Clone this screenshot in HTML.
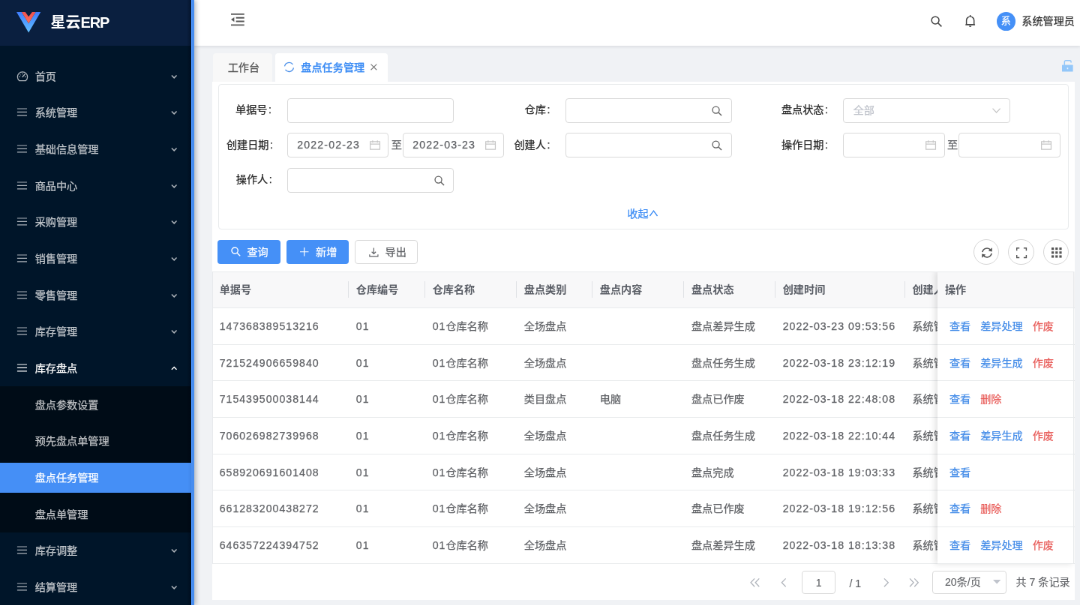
<!DOCTYPE html>
<html lang="zh-CN">
<head>
<meta charset="utf-8">
<title>星云ERP - 盘点任务管理</title>
<style>
*{box-sizing:border-box;margin:0;padding:0}
html,body{width:1080px;height:605px;overflow:hidden;background:#f0f2f5}
body{font-family:"Liberation Sans","Noto Sans CJK SC",sans-serif;font-size:14.15px;color:#606266;-webkit-text-stroke:.25px}
#app{position:absolute;left:0;top:0;width:1440px;height:807px;transform:scale(0.75);transform-origin:0 0;background:#f0f2f5;overflow:hidden;will-change:transform}
#app *{position:absolute}
svg{overflow:visible}
/* sidebar */
#side{left:0;top:0;width:254.53px;height:807px;background:#001529;box-shadow:2px 0 6px rgba(0,21,41,.35);z-index:5}
#logo{left:0;top:0;width:100%;height:61.07px;background:#0a1f3f}
#logo svg{left:22.4px;top:15.73px;width:32.27px;height:27.47px}
#logo .ttl{left:67.47px;top:0;height:61.07px;line-height:61.07px;font-size:20px;font-weight:700;color:#fff;white-space:nowrap;letter-spacing:0;-webkit-text-stroke:0}
#strip{left:254.53px;top:0;width:4.13px;height:807px;background:#478df0;z-index:6;box-shadow:2px 0 6px rgba(0,21,41,.3)}
#sideshade{left:248.67px;top:0;width:5.87px;height:807px;background:linear-gradient(90deg,rgba(0,0,0,0),rgba(0,5,15,.35));}
#subbg{left:0;top:515.0px;width:100%;height:194.67px;background:#000c17}
.it{left:0;width:100%;height:48.67px;color:rgba(255,255,255,.68)}
.it .mi{left:22.13px;top:16.8px;width:14.93px;height:14.93px}
.it .mt{left:46.67px;top:0.53px;height:48.67px;line-height:48.67px;font-size:14.15px;white-space:nowrap}
.it .chev{left:226.53px;top:19.6px;width:10.4px;height:10.4px}
.it.open{color:#fff}
.it.act{color:#fff}
.it.act::before{content:"";position:absolute;left:0;top:4.67px;width:100%;height:40.4px;background:#458ff6}
/* header */
#head{left:258.67px;top:0;width:1181.33px;height:61.2px;background:#fff;box-shadow:0 1px 4px rgba(0,21,41,.12);z-index:3}
#head .uname{left:1103.6px;top:0;height:56.8px;line-height:56.8px;font-size:14.15px;color:#333;white-space:nowrap}
#head .av{left:1070.4px;top:16.0px;width:24.67px;height:24.67px;border-radius:50%;background:#4590f7;color:#fff;font-size:13px;text-align:center;line-height:24.67px}
/* tabs */
.tab{top:70.53px;height:38.13px;border-radius:4px 4px 0 0;font-size:14.15px;line-height:38.13px;white-space:nowrap}
#tab1{left:283.73px;width:78.8px;background:#f8f8f8;color:#555;padding-left:20.0px}
#tab2{left:367.07px;width:149.87px;background:#fff;color:#3b8cf5}
#tab2 .tt{left:34.27px;top:0;font-weight:500}
#main{left:282.67px;top:108.67px;width:1150.4px;height:691.33px;background:#fff}
/* form */
#card{left:8.4px;top:3.47px;width:1134.4px;height:194.0px;border:1px solid #e8eaec;border-radius:4px}
.lb{width:106.67px;text-align:right;font-size:14.15px;color:#2a2a2a;height:33.07px;line-height:33.07px;white-space:nowrap;font-weight:400;margin-top:-0.53px}
.in{height:33.07px;border:1px solid #d9d9d9;border-radius:4px;background:#fff;font-size:14.15px;color:#606266;line-height:31.2px;white-space:nowrap}
.r1{top:17.87px}.r2{top:64.2px}.r3{top:110.87px}
.num{letter-spacing:1.15px}
.c.num{letter-spacing:1px}
.c i{position:static!important;font-style:normal;letter-spacing:1px}
.co{position:static!important;font-weight:400;margin-left:1.6px}
.zhi{font-size:14.15px;color:#606266;height:33.07px;line-height:33.07px}
/* toolbar */
.btn{top:210.93px;height:32.53px;border-radius:4px;font-size:14.15px;line-height:32.53px;white-space:nowrap}
.btn.pri{background:#4590f7;color:#fff}
.btn.def{background:#fff;color:#606266;border:1px solid #d9d9d9;line-height:30.67px}
.cb{top:209.87px;width:34.4px;height:34.4px;border-radius:50%;border:1px solid #d6d6d6;background:#fff}
/* table */
#tbl{left:0;top:253.47px;width:1150.4px;height:389.73px}
#tblb{left:0;top:0;width:1149.73px;height:389.73px;border:1px solid #e8eaec;border-bottom:0;z-index:2;pointer-events:none}
#thead{left:0;top:0;width:100%;height:48.4px;background:#f8f8f9;border-bottom:1px solid #e8eaec}
.c{top:0;height:100%;padding-left:10.0px;font-size:14.15px;white-space:nowrap;overflow:hidden;line-height:48.67px;color:#606266}
.c.h{font-weight:700;color:#5a5e66;line-height:48.4px;-webkit-text-stroke:0}
.sep{top:12.67px;width:1px;height:22.67px;background:#dfe1e5}
.tr{left:0;width:100%;height:48.67px;border-bottom:1px solid #e8eaec}
.fx{left:967.33px;width:181.73px;height:48.67px;background:#fff;border-bottom:1px solid #e8eaec;line-height:48.67px;font-size:14.15px}
.fx a{position:static!important;display:inline-block;margin-left:12.93px;color:#448ce8}
.fx a:first-child{margin-left:16.0px}
.fx a.red{color:#e85d5a}
#fxh{left:967.33px;top:0;width:181.73px;height:48.4px;background:#f8f8f9;border-bottom:1px solid #e8eaec;font-weight:700;color:#5a5e66;line-height:48.4px;-webkit-text-stroke:0;font-size:14.15px;padding-left:10.0px}
#fxclip{left:940.67px;top:0;width:209.73px;height:416.4px;overflow:hidden}
#fxshadow{left:26.67px;top:0;width:181.73px;height:389.73px;box-shadow:-3px 0 8px rgba(0,0,0,.12)}
/* pager */
.pg{top:652.67px;height:30.4px;line-height:30.4px;font-size:14.15px;color:#606266;white-space:nowrap;-webkit-text-stroke:.12px}
.pgb{border:1px solid #d9d9d9;border-radius:4px}
</style>
</head>
<body>
<div id="app">
  <div id="side">
    <div id="logo">
      <svg viewBox="0 0 24.2 20.6"><defs><linearGradient id="g1" x1="0" y1="0" x2="0" y2="1"><stop offset="0" stop-color="#3f7dff"/><stop offset="1" stop-color="#62c0ff"/></linearGradient><linearGradient id="g2" x1="0" y1="0" x2="0" y2="1"><stop offset="0" stop-color="#f0524f"/><stop offset="1" stop-color="#fb6e5a"/></linearGradient></defs>
      <polygon points="0,0 5.1,0 12.1,11.4 19.2,0 24.2,0 12.1,20.6" fill="url(#g1)"/>
      <polygon points="5.1,0 8.8,0 12.1,4.6 15.7,0 19.2,0 12.1,11.4" fill="url(#g2)"/></svg>
      <div class="ttl">星云<span style="position:static;letter-spacing:-1.1px">ERP</span></div>
    </div>
    <div id="subbg"></div>
    <div id="sideshade"></div>
<div class="it" style="top:77.0px"><svg class="mi" viewBox="0 0 12 12" style="left:21.6px;top:16.53px;width:16.0px;height:16.0px"><path d="M2.7 10.15 A5 5 0 1 1 9.3 10.15 Z" stroke="currentColor" stroke-width=".95" fill="none" stroke-linejoin="round"/><path d="M6 6.4 L8.4 3.7" stroke="currentColor" stroke-width="1" stroke-linecap="round"/><path d="M2.6 6.4h.9M6 2.9v.8M8.5 6.4h.9M3.5 3.9l.6.6" stroke="currentColor" stroke-width=".7" stroke-linecap="round"/></svg><span class="mt">首页</span><svg class="chev" viewBox="0 0 10 10"><path d="M1.8 3.4 L5 6.6 L8.2 3.4" stroke="currentColor" stroke-width="1.4" fill="none"/></svg></div>
<div class="it" style="top:125.67px"><svg class="mi" viewBox="0 0 16 16"><path d="M1 3.2h14M1 8h14M1 12.8h14" stroke="currentColor" stroke-width="1.3" fill="none"/></svg><span class="mt">系统管理</span><svg class="chev" viewBox="0 0 10 10"><path d="M1.8 3.4 L5 6.6 L8.2 3.4" stroke="currentColor" stroke-width="1.4" fill="none"/></svg></div>
<div class="it" style="top:174.33px"><svg class="mi" viewBox="0 0 16 16"><path d="M1 3.2h14M1 8h14M1 12.8h14" stroke="currentColor" stroke-width="1.3" fill="none"/></svg><span class="mt">基础信息管理</span><svg class="chev" viewBox="0 0 10 10"><path d="M1.8 3.4 L5 6.6 L8.2 3.4" stroke="currentColor" stroke-width="1.4" fill="none"/></svg></div>
<div class="it" style="top:223.0px"><svg class="mi" viewBox="0 0 16 16"><path d="M1 3.2h14M1 8h14M1 12.8h14" stroke="currentColor" stroke-width="1.3" fill="none"/></svg><span class="mt">商品中心</span><svg class="chev" viewBox="0 0 10 10"><path d="M1.8 3.4 L5 6.6 L8.2 3.4" stroke="currentColor" stroke-width="1.4" fill="none"/></svg></div>
<div class="it" style="top:271.67px"><svg class="mi" viewBox="0 0 16 16"><path d="M1 3.2h14M1 8h14M1 12.8h14" stroke="currentColor" stroke-width="1.3" fill="none"/></svg><span class="mt">采购管理</span><svg class="chev" viewBox="0 0 10 10"><path d="M1.8 3.4 L5 6.6 L8.2 3.4" stroke="currentColor" stroke-width="1.4" fill="none"/></svg></div>
<div class="it" style="top:320.33px"><svg class="mi" viewBox="0 0 16 16"><path d="M1 3.2h14M1 8h14M1 12.8h14" stroke="currentColor" stroke-width="1.3" fill="none"/></svg><span class="mt">销售管理</span><svg class="chev" viewBox="0 0 10 10"><path d="M1.8 3.4 L5 6.6 L8.2 3.4" stroke="currentColor" stroke-width="1.4" fill="none"/></svg></div>
<div class="it" style="top:369.0px"><svg class="mi" viewBox="0 0 16 16"><path d="M1 3.2h14M1 8h14M1 12.8h14" stroke="currentColor" stroke-width="1.3" fill="none"/></svg><span class="mt">零售管理</span><svg class="chev" viewBox="0 0 10 10"><path d="M1.8 3.4 L5 6.6 L8.2 3.4" stroke="currentColor" stroke-width="1.4" fill="none"/></svg></div>
<div class="it" style="top:417.67px"><svg class="mi" viewBox="0 0 16 16"><path d="M1 3.2h14M1 8h14M1 12.8h14" stroke="currentColor" stroke-width="1.3" fill="none"/></svg><span class="mt">库存管理</span><svg class="chev" viewBox="0 0 10 10"><path d="M1.8 3.4 L5 6.6 L8.2 3.4" stroke="currentColor" stroke-width="1.4" fill="none"/></svg></div>
<div class="it open" style="top:466.33px"><svg class="mi" viewBox="0 0 16 16"><path d="M1 3.2h14M1 8h14M1 12.8h14" stroke="currentColor" stroke-width="1.3" fill="none"/></svg><span class="mt">库存盘点</span><svg class="chev" viewBox="0 0 10 10"><path d="M1.8 6.6 L5 3.4 L8.2 6.6" stroke="currentColor" stroke-width="1.4" fill="none"/></svg></div>
<div class="it sub" style="top:515.0px"><span class="mt">盘点参数设置</span></div>
<div class="it sub" style="top:563.67px"><span class="mt">预先盘点单管理</span></div>
<div class="it sub act" style="top:612.33px"><span class="mt">盘点任务管理</span></div>
<div class="it sub" style="top:661.0px"><span class="mt">盘点单管理</span></div>
<div class="it" style="top:709.67px"><svg class="mi" viewBox="0 0 16 16"><path d="M1 3.2h14M1 8h14M1 12.8h14" stroke="currentColor" stroke-width="1.3" fill="none"/></svg><span class="mt">库存调整</span><svg class="chev" viewBox="0 0 10 10"><path d="M1.8 3.4 L5 6.6 L8.2 3.4" stroke="currentColor" stroke-width="1.4" fill="none"/></svg></div>
<div class="it" style="top:758.33px"><svg class="mi" viewBox="0 0 16 16"><path d="M1 3.2h14M1 8h14M1 12.8h14" stroke="currentColor" stroke-width="1.3" fill="none"/></svg><span class="mt">结算管理</span><svg class="chev" viewBox="0 0 10 10"><path d="M1.8 3.4 L5 6.6 L8.2 3.4" stroke="currentColor" stroke-width="1.4" fill="none"/></svg></div>
  </div>
  <div id="strip"></div>

  <div id="head">
    <svg style="left:49.33px;top:17.87px;width:17.73px;height:16.53px" viewBox="0 0 13.3 12.4"><path d="M0 .6h13.3M5 4.3h8.3M5 7.9h8.3M0 11.5h13.3" stroke="#595959" stroke-width="1.35" fill="none"/><path d="M0 6.1L3.3 3.7v4.8z" fill="#595959"/></svg>
    <svg style="left:982.13px;top:20.53px;width:15.2px;height:15.2px" viewBox="0 0 12 12"><circle cx="4.8" cy="4.8" r="3.9" stroke="#444" stroke-width="1.2" fill="none"/><path d="M7.7 7.7L11.4 11.4" stroke="#444" stroke-width="1.3"/></svg>
    <svg style="left:1028.27px;top:19.73px;width:13.33px;height:16.53px" viewBox="0 0 10 12.4"><path d="M1.2 9.6V5.4a3.8 3.8 0 0 1 7.6 0v4.2zM0.2 9.7h9.6M5 0v1.4" stroke="#444" stroke-width="1.1" fill="none" stroke-linejoin="round"/><path d="M3.8 10.8a1.2 1.2 0 0 0 2.4 0z" fill="#444"/></svg>
    <div class="av">系</div>
    <div class="uname">系统管理员</div>
  </div>

  <div class="tab" id="tab1">工作台</div>
  <div class="tab" id="tab2">
    <svg style="left:11.2px;top:11.87px;width:14.93px;height:14.93px" viewBox="0 0 12 12"><path d="M1.2 5.2A4.9 4.9 0 0 1 10 3.2M10.8 6.8A4.9 4.9 0 0 1 2 8.8" stroke="#4a8fe9" stroke-width="1.05" fill="none"/></svg>
    <span class="tt">盘点任务管理</span>
    <svg style="left:127.2px;top:14.67px;width:8.8px;height:8.8px" viewBox="0 0 8 8"><path d="M.5 .5L7.5 7.5M7.5 .5L.5 7.5" stroke="#777" stroke-width="1" fill="none"/></svg>
  </div>
  <svg style="left:1416.13px;top:80.27px;width:14.93px;height:16.0px" viewBox="0 0 11.2 12"><rect x="0" y="4.9" width="11" height="6.8" rx=".5" fill="#93c7f9"/><path d="M2.5 5V1.8a1.3 1.3 0 0 1 1.3-1.3H7.8a1.3 1.3 0 0 1 1.3 1.3V2.7" stroke="#93c7f9" stroke-width="1.1" fill="none"/><rect x="5" y="7.6" width="1.2" height="1.6" fill="#e8f3fe"/></svg>

  <div id="main">
    <div id="card">
      <div class="lb r1" style="left:-36.67px">单据号<b class="co">:</b></div>
      <div class="in r1" style="left:90.8px;width:222.27px"></div>
      <div class="lb r2" style="left:-34.67px">创建日期<b class="co">:</b></div>
      <div class="in r2" style="left:90.8px;width:134.8px"><span class="num" style="left:12.4px">2022-02-23</span><svg class="cal" style="left:108.93px;top:8.8px;width:14.13px;height:12.8px" viewBox="0 0 11 10"><path d="M.5 1.5h10v8H.5zM.5 4h10M3 .2v2.4M8 .2v2.4" stroke="#c6c6c6" stroke-width=".95" fill="none"/></svg></div>
      <div class="zhi r2" style="left:229.73px">至</div>
      <div class="in r2" style="left:244.8px;width:135.2px"><span class="num" style="left:12.4px">2022-03-23</span><svg class="cal" style="left:108.93px;top:8.8px;width:14.13px;height:12.8px" viewBox="0 0 11 10"><path d="M.5 1.5h10v8H.5zM.5 4h10M3 .2v2.4M8 .2v2.4" stroke="#c6c6c6" stroke-width=".95" fill="none"/></svg></div>
      <div class="lb r3" style="left:-36.0px">操作人<b class="co">:</b></div>
      <div class="in r3" style="left:90.8px;width:222.27px"><svg style="left:194.67px;top:8.67px;width:13.87px;height:13.87px" viewBox="0 0 12 12"><circle cx="4.8" cy="4.8" r="3.9" stroke="#606060" stroke-width="1.15" fill="none"/><path d="M7.7 7.7L11.3 11.3" stroke="#606060" stroke-width="1.25"/></svg></div>

      <div class="lb r1" style="left:334.67px">仓库<b class="co">:</b></div>
      <div class="in r1" style="left:461.6px;width:222.27px"><svg style="left:194.67px;top:8.67px;width:13.87px;height:13.87px" viewBox="0 0 12 12"><circle cx="4.8" cy="4.8" r="3.9" stroke="#606060" stroke-width="1.15" fill="none"/><path d="M7.7 7.7L11.3 11.3" stroke="#606060" stroke-width="1.25"/></svg></div>
      <div class="lb r2" style="left:334.67px">创建人<b class="co">:</b></div>
      <div class="in r2" style="left:461.6px;width:222.27px"><svg style="left:194.67px;top:8.67px;width:13.87px;height:13.87px" viewBox="0 0 12 12"><circle cx="4.8" cy="4.8" r="3.9" stroke="#606060" stroke-width="1.15" fill="none"/><path d="M7.7 7.7L11.3 11.3" stroke="#606060" stroke-width="1.25"/></svg></div>

      <div class="lb r1" style="left:705.33px">盘点状态<b class="co">:</b></div>
      <div class="in r1" style="left:832.27px;width:222.27px"><span style="left:12.4px;color:#c0c4cc">全部</span><svg style="left:197.33px;top:12.0px;width:11.2px;height:6.93px" viewBox="0 0 8.4 5.2"><path d="M.4 .5L4.2 4.5L8 .5" stroke="#c6c6c6" stroke-width=".95" fill="none"/></svg></div>
      <div class="lb r2" style="left:705.33px">操作日期<b class="co">:</b></div>
      <div class="in r2" style="left:832.27px;width:135.73px"><svg class="cal" style="left:108.93px;top:8.8px;width:14.13px;height:12.8px" viewBox="0 0 11 10"><path d="M.5 1.5h10v8H.5zM.5 4h10M3 .2v2.4M8 .2v2.4" stroke="#c6c6c6" stroke-width=".95" fill="none"/></svg></div>
      <div class="zhi r2" style="left:971.07px">至</div>
      <div class="in r2" style="left:985.87px;width:135.73px"><svg class="cal" style="left:108.93px;top:8.8px;width:14.13px;height:12.8px" viewBox="0 0 11 10"><path d="M.5 1.5h10v8H.5zM.5 4h10M3 .2v2.4M8 .2v2.4" stroke="#c6c6c6" stroke-width=".95" fill="none"/></svg></div>

      <div style="left:544.4px;top:162.8px;font-size:14.15px;color:#3b8cf5;line-height:18.67px;white-space:nowrap">收起</div>
      <svg style="left:574.0px;top:167.33px;width:10.93px;height:8.53px" viewBox="0 0 8.2 6.4"><path d="M.3 6L4.1 .8L7.9 6" stroke="#3b8cf5" stroke-width="1" fill="none"/></svg>
    </div>

    <div class="btn pri" style="left:7.6px;width:83.47px"><svg style="left:17.87px;top:9.6px;width:12.8px;height:12.8px" viewBox="0 0 12 12"><circle cx="4.8" cy="4.8" r="3.9" stroke="#fff" stroke-width="1.3" fill="none"/><path d="M7.7 7.7L11.4 11.4" stroke="#fff" stroke-width="1.4"/></svg><span style="left:39.2px">查询</span></div>
    <div class="btn pri" style="left:99.2px;width:83.33px"><svg style="left:18.13px;top:10.13px;width:11.47px;height:11.47px" viewBox="0 0 10 10"><path d="M5 0v10M0 5h10" stroke="#fff" stroke-width="1" fill="none"/></svg><span style="left:39.2px">新增</span></div>
    <div class="btn def" style="left:190.67px;width:83.2px"><svg style="left:17.6px;top:9.33px;width:12.8px;height:12.8px" viewBox="0 0 12 12"><path d="M6 .5v7.4M3.4 5.4L6 8l2.6-2.6M.8 8.6v2.6h10.4V8.6" stroke="#606266" stroke-width="1.1" fill="none"/></svg><span style="left:39.2px">导出</span></div>

    <div class="cb" style="left:1014.93px"><svg style="left:9.2px;top:9.2px;width:16.0px;height:16.0px" viewBox="0 0 12 12"><path d="M1.4 5.3A4.7 4.7 0 0 1 9.7 3.3M10.6 6.7A4.7 4.7 0 0 1 2.3 8.7" stroke="#555" stroke-width="1.25" fill="none"/><path d="M11.1 .9v3.9L7.3 4.2zM.9 11.1V7.2l3.8 .6z" fill="#555"/></svg></div>
    <div class="cb" style="left:1061.6px"><svg style="left:10.13px;top:10.13px;width:14.13px;height:14.13px" viewBox="0 0 12 12"><path d="M.6 3.6V.6h3M8.4 .6h3v3M11.4 8.4v3h-3M3.6 11.4h-3v-3" stroke="#555" stroke-width="1.2" fill="none"/></svg></div>
    <div class="cb" style="left:1108.0px"><svg style="left:10.4px;top:10.53px;width:13.6px;height:13.6px" viewBox="0 0 11 11"><g fill="#555"><rect x="0" y="0" width="2.6" height="2.6"/><rect x="4.2" y="0" width="2.6" height="2.6"/><rect x="8.4" y="0" width="2.6" height="2.6"/><rect x="0" y="4.2" width="2.6" height="2.6"/><rect x="4.2" y="4.2" width="2.6" height="2.6"/><rect x="8.4" y="4.2" width="2.6" height="2.6"/><rect x="0" y="8.4" width="2.6" height="2.6"/><rect x="4.2" y="8.4" width="2.6" height="2.6"/><rect x="8.4" y="8.4" width="2.6" height="2.6"/></g></svg></div>

    <div id="tbl">
      <div id="thead"><div class="c h" style="left:0.0px;width:182.13px">单据号</div><i class="sep" style="left:181.47px"></i><div class="c h" style="left:182.13px;width:101.87px">仓库编号</div><i class="sep" style="left:283.33px"></i><div class="c h" style="left:284.0px;width:122.13px">仓库名称</div><i class="sep" style="left:405.47px"></i><div class="c h" style="left:406.13px;width:101.07px">盘点类别</div><i class="sep" style="left:506.53px"></i><div class="c h" style="left:507.2px;width:122.13px">盘点内容</div><i class="sep" style="left:628.67px"></i><div class="c h" style="left:629.33px;width:121.73px">盘点状态</div><i class="sep" style="left:750.4px"></i><div class="c h" style="left:751.07px;width:172.67px">创建时间</div><i class="sep" style="left:923.07px"></i><div class="c h" style="left:923.73px;width:73.6px">创建人</div></div>
<div class="tr" style="top:48.93px"><div class="c num" style="left:0.0px;width:182.13px">147368389513216</div><div class="c num" style="left:182.13px;width:101.87px">01</div><div class="c" style="left:284.0px;width:122.13px"><i>01</i>仓库名称</div><div class="c" style="left:406.13px;width:101.07px">全场盘点</div><div class="c" style="left:507.2px;width:122.13px"></div><div class="c" style="left:629.33px;width:121.73px">盘点差异生成</div><div class="c num" style="left:751.07px;width:172.67px">2022-03-23 09:53:56</div><div class="c" style="left:923.73px;width:73.6px">系统管理员</div></div>
<div class="fx" style="top:48.93px"><a class="">查看</a><a class="">差异处理</a><a class="red">作废</a></div>
<div class="tr" style="top:97.6px"><div class="c num" style="left:0.0px;width:182.13px">721524906659840</div><div class="c num" style="left:182.13px;width:101.87px">01</div><div class="c" style="left:284.0px;width:122.13px"><i>01</i>仓库名称</div><div class="c" style="left:406.13px;width:101.07px">全场盘点</div><div class="c" style="left:507.2px;width:122.13px"></div><div class="c" style="left:629.33px;width:121.73px">盘点任务生成</div><div class="c num" style="left:751.07px;width:172.67px">2022-03-18 23:12:19</div><div class="c" style="left:923.73px;width:73.6px">系统管理员</div></div>
<div class="fx" style="top:97.6px"><a class="">查看</a><a class="">差异生成</a><a class="red">作废</a></div>
<div class="tr" style="top:146.27px"><div class="c num" style="left:0.0px;width:182.13px">715439500038144</div><div class="c num" style="left:182.13px;width:101.87px">01</div><div class="c" style="left:284.0px;width:122.13px"><i>01</i>仓库名称</div><div class="c" style="left:406.13px;width:101.07px">类目盘点</div><div class="c" style="left:507.2px;width:122.13px">电脑</div><div class="c" style="left:629.33px;width:121.73px">盘点已作废</div><div class="c num" style="left:751.07px;width:172.67px">2022-03-18 22:48:08</div><div class="c" style="left:923.73px;width:73.6px">系统管理员</div></div>
<div class="fx" style="top:146.27px"><a class="">查看</a><a class="red">删除</a></div>
<div class="tr" style="top:194.93px"><div class="c num" style="left:0.0px;width:182.13px">706026982739968</div><div class="c num" style="left:182.13px;width:101.87px">01</div><div class="c" style="left:284.0px;width:122.13px"><i>01</i>仓库名称</div><div class="c" style="left:406.13px;width:101.07px">全场盘点</div><div class="c" style="left:507.2px;width:122.13px"></div><div class="c" style="left:629.33px;width:121.73px">盘点任务生成</div><div class="c num" style="left:751.07px;width:172.67px">2022-03-18 22:10:44</div><div class="c" style="left:923.73px;width:73.6px">系统管理员</div></div>
<div class="fx" style="top:194.93px"><a class="">查看</a><a class="">差异生成</a><a class="red">作废</a></div>
<div class="tr" style="top:243.6px"><div class="c num" style="left:0.0px;width:182.13px">658920691601408</div><div class="c num" style="left:182.13px;width:101.87px">01</div><div class="c" style="left:284.0px;width:122.13px"><i>01</i>仓库名称</div><div class="c" style="left:406.13px;width:101.07px">全场盘点</div><div class="c" style="left:507.2px;width:122.13px"></div><div class="c" style="left:629.33px;width:121.73px">盘点完成</div><div class="c num" style="left:751.07px;width:172.67px">2022-03-18 19:03:33</div><div class="c" style="left:923.73px;width:73.6px">系统管理员</div></div>
<div class="fx" style="top:243.6px"><a class="">查看</a></div>
<div class="tr" style="top:292.27px"><div class="c num" style="left:0.0px;width:182.13px">661283200438272</div><div class="c num" style="left:182.13px;width:101.87px">01</div><div class="c" style="left:284.0px;width:122.13px"><i>01</i>仓库名称</div><div class="c" style="left:406.13px;width:101.07px">全场盘点</div><div class="c" style="left:507.2px;width:122.13px"></div><div class="c" style="left:629.33px;width:121.73px">盘点已作废</div><div class="c num" style="left:751.07px;width:172.67px">2022-03-18 19:12:56</div><div class="c" style="left:923.73px;width:73.6px">系统管理员</div></div>
<div class="fx" style="top:292.27px"><a class="">查看</a><a class="red">删除</a></div>
<div class="tr" style="top:340.93px"><div class="c num" style="left:0.0px;width:182.13px">646357224394752</div><div class="c num" style="left:182.13px;width:101.87px">01</div><div class="c" style="left:284.0px;width:122.13px"><i>01</i>仓库名称</div><div class="c" style="left:406.13px;width:101.07px">全场盘点</div><div class="c" style="left:507.2px;width:122.13px"></div><div class="c" style="left:629.33px;width:121.73px">盘点差异生成</div><div class="c num" style="left:751.07px;width:172.67px">2022-03-18 18:13:38</div><div class="c" style="left:923.73px;width:73.6px">系统管理员</div></div>
<div class="fx" style="top:340.93px"><a class="">查看</a><a class="">差异处理</a><a class="red">作废</a></div>
      <div id="fxh">操作</div>
      <div id="fxclip"><div id="fxshadow"></div></div>
      <div id="tblb"></div>
    </div>

    <svg class="pg" style="left:717.73px;top:662.13px;width:13.33px;height:11.6px" viewBox="0 0 10 8.7"><path d="M4.6 .3L.8 4.35L4.6 8.4M9.2 .3L5.4 4.35L9.2 8.4" stroke="#b0b4bb" stroke-width="1" fill="none"/></svg>
    <svg class="pg" style="left:758.0px;top:662.13px;width:7.6px;height:11.6px" viewBox="0 0 5.7 8.7"><path d="M5 .3L1 4.35L5 8.4" stroke="#b0b4bb" stroke-width="1" fill="none"/></svg>
    <div class="pg pgb" style="left:786.67px;width:44.93px;text-align:center;line-height:30.53px">1</div>
    <div class="pg" style="left:849.87px;top:654.0px">/ 1</div>
    <svg class="pg" style="left:895.07px;top:662.13px;width:7.6px;height:11.6px" viewBox="0 0 5.7 8.7"><path d="M.7 .3L4.7 4.35L.7 8.4" stroke="#b0b4bb" stroke-width="1" fill="none"/></svg>
    <svg class="pg" style="left:929.6px;top:662.13px;width:13.33px;height:11.6px" viewBox="0 0 10 8.7"><path d="M.8 .3L4.6 4.35L.8 8.4M5.4 .3L9.2 4.35L5.4 8.4" stroke="#b0b4bb" stroke-width="1" fill="none"/></svg>
    <div class="pg pgb" style="left:960.27px;width:98.93px;line-height:29.07px"><span style="left:16.0px">20条/页</span><svg style="left:79.6px;top:10.93px;width:10.4px;height:5.6px" viewBox="0 0 7.8 4.2"><path d="M0 0h7.8L3.9 4.2z" fill="#c0c4cc"/></svg></div>
    <div class="pg" style="left:1071.73px">共 7 条记录</div>
  </div>
</div>
</body>
</html>
